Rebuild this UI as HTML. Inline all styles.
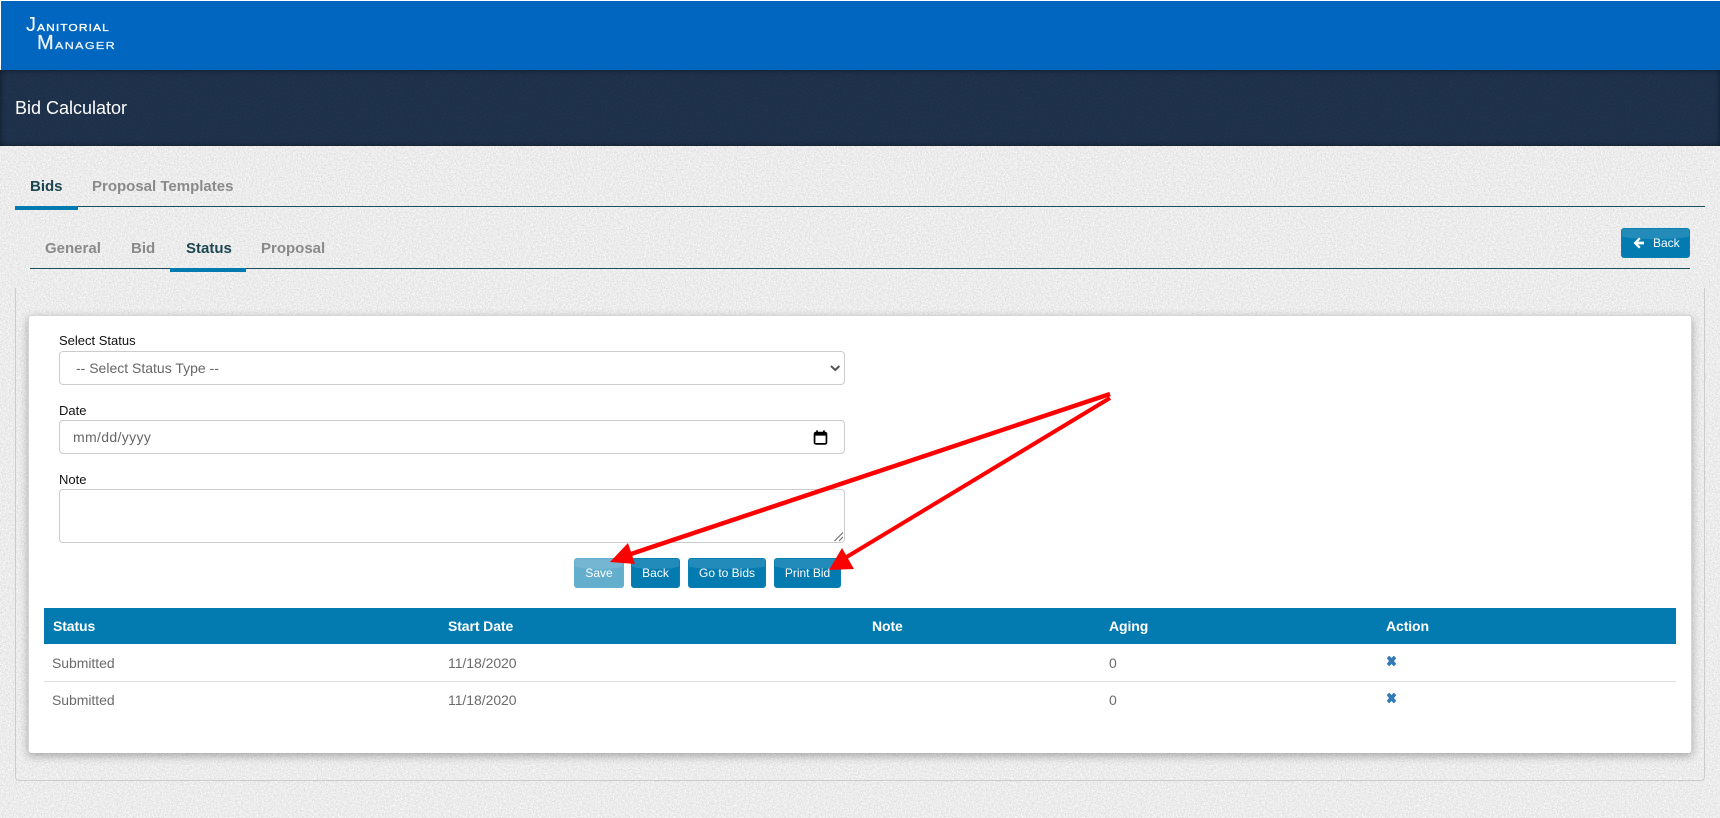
<!DOCTYPE html>
<html lang="en">
<head>
<meta charset="utf-8">
<title>Bid Calculator</title>
<style>
*{box-sizing:border-box}
html,body{margin:0;padding:0;width:1720px;height:818px;overflow:hidden;background:#ececec;font-family:"Liberation Sans",Arial,sans-serif}
.abs,.t{position:absolute}
.t{white-space:nowrap;line-height:20px}
#tex{position:absolute;left:0;top:0;width:1720px;height:818px}
#top{position:absolute;left:1px;top:1px;width:1719px;height:69px;background:#0066c0}
#navs{position:absolute;left:0;top:70px;width:1720px;height:76px;box-shadow:inset 0 0 6px rgba(0,0,0,.5)}
.tab{font-size:15px;font-weight:bold;color:#8a8a8a}
.tab.on{color:#1c4650}
.line{position:absolute;height:1px;background:#1c4f5c}
.act{position:absolute;height:4px;background:#047bb0}
.btn{position:absolute;top:558px;height:30px;border-radius:3px;background:#047bb0;color:#fff;font-size:12px;line-height:28px;text-align:center;overflow:hidden;border:1px solid #0a7fb2}
.btn:before{content:"";position:absolute;left:0;right:0;top:0;height:10px;background:rgba(255,255,255,.12);border-radius:0 0 50% 50%/0 0 3px 3px}
.btn span{position:relative}
.lbl{font-size:13px;color:#111}
.field{position:absolute;left:59px;width:786px;background:#fff;border:1px solid #ccc;border-radius:4px}
.val{font-size:14px;color:#666}
.th{font-size:14px;font-weight:bold;color:#fff;letter-spacing:-.1px}
.td{font-size:14px;color:#6b6b6b;letter-spacing:-.05px}
.sm{display:inline-block;transform-origin:left center;font-size:10px;-webkit-text-stroke:.3px currentColor}
</style>
</head>
<body>
<svg id="tex" xmlns="http://www.w3.org/2000/svg" width="1720" height="818">
<defs>
<filter id="light" x="0" y="0" width="100%" height="100%" color-interpolation-filters="sRGB">
<feTurbulence type="fractalNoise" baseFrequency="0.75" numOctaves="2" seed="4"/>
<feColorMatrix type="matrix" values="0.24 0 0 0 0.805  0.24 0 0 0 0.805  0.24 0 0 0 0.805  0 0 0 0 1"/>
</filter>
<filter id="dark" x="0" y="0" width="100%" height="100%" color-interpolation-filters="sRGB">
<feTurbulence type="fractalNoise" baseFrequency="0.75" numOctaves="2" seed="9"/>
<feColorMatrix type="matrix" values="0.07 0 0 0 0.085  0.07 0 0 0 0.158  0.07 0 0 0 0.26  0 0 0 0 1"/>
</filter>
</defs>
<rect width="1720" height="818" fill="#ececec" filter="url(#light)"/>
<rect x="0" y="70" width="1720" height="76" fill="#1f314c" filter="url(#dark)"/>
<rect x="0" y="0" width="1720" height="1" fill="#fff"/>
<rect x="0" y="0" width="1" height="70" fill="#fff"/>
</svg>

<div id="top"></div>
<div class="t" style="left:26px;top:12px;height:26px;color:#fff;line-height:26px;letter-spacing:.9px"><span style="font-size:20px">J</span><span class="sm" style="transform:scaleX(1.2)">ANITORIAL</span></div>
<div class="t" style="left:37px;top:30px;height:26px;color:#e6f0fa;line-height:26px;letter-spacing:1.1px"><span style="font-size:20px;-webkit-text-stroke:.3px currentColor">M</span><span class="sm" style="transform:scaleX(1.25)">ANAGER</span></div>

<div id="navs"></div>
<div class="t" style="left:15px;top:98px;font-size:18px;color:#fff;line-height:20px">Bid Calculator</div>

<div class="t tab on" style="left:30px;top:177px">Bids</div>
<div class="t tab" style="left:92px;top:177px">Proposal Templates</div>
<div class="line" style="left:15px;top:206px;width:1690px"></div>
<div class="act" style="left:15px;top:206px;width:63px"></div>

<div class="t tab" style="left:45px;top:239px">General</div>
<div class="t tab" style="left:131px;top:239px">Bid</div>
<div class="t tab on" style="left:186px;top:239px">Status</div>
<div class="t tab" style="left:261px;top:239px">Proposal</div>
<div class="line" style="left:30px;top:268px;width:1660px"></div>
<div class="act" style="left:170px;top:268px;width:76px"></div>

<div class="btn" style="left:1621px;top:228px;width:69px">
<svg class="abs" style="left:10px;top:7px" width="13" height="14" viewBox="0 0 13 14"><path d="M7 1.5 1.5 7 7 12.5 8.6 10.9 6 8.4H12V5.6H6L8.6 3.1Z" fill="#fff"/></svg>
<span style="position:absolute;left:31px;top:0">Back</span></div>

<div class="abs" style="left:15px;top:288px;width:1690px;height:493px;border:1px solid #ccc;border-top:0;border-radius:0 0 4px 4px"></div>
<div class="abs" style="left:28px;top:315px;width:1664px;height:438px;background:#fff;border-radius:3px;border:1px solid #d6d6d6;border-bottom:0;box-shadow:0 3px 9px rgba(0,0,0,.3)"></div>

<div class="t lbl" style="left:59px;top:331px">Select Status</div>
<div class="field" style="top:351px;height:34px"></div>
<div class="t val" style="left:76px;top:358px">-- Select Status Type --</div>
<svg class="abs" style="left:830px;top:363px" width="11" height="10" viewBox="0 0 11 10"><path d="M1 3 5.2 7 9.4 3" fill="none" stroke="#555" stroke-width="2"/></svg>

<div class="t lbl" style="left:59px;top:401px">Date</div>
<div class="field" style="top:420px;height:34px"></div>
<div class="t val" style="left:73px;top:427px;letter-spacing:.35px">mm/dd/yyyy</div>
<svg class="abs" style="left:813px;top:430px" width="15" height="15" viewBox="0 0 15 15"><path fill-rule="evenodd" d="M.7 4C.7 2.7 1.7 1.8 3 1.8H12C13.3 1.8 14.3 2.7 14.3 4V12.5C14.3 13.8 13.3 14.7 12 14.7H3C1.7 14.7 .7 13.8 .7 12.5ZM2.4 5.6V13H12.6V5.6Z" fill="#000"/><path d="M3.2 .4H4.9V3H3.2ZM10.1 .4H11.8V3H10.1Z" fill="#000"/></svg>

<div class="t lbl" style="left:59px;top:470px">Note</div>
<div class="field" style="top:489px;height:54px"></div>
<svg class="abs" style="left:833px;top:531px" width="11" height="11" viewBox="0 0 11 11"><path d="M1.5 10 10 1.5M6 10 10 6" stroke="#666" stroke-width="1"/></svg>

<div class="btn" style="left:574px;width:50px;opacity:.62"><span>Save</span></div>
<div class="btn" style="left:631px;width:49px"><span>Back</span></div>
<div class="btn" style="left:688px;width:78px"><span>Go to Bids</span></div>
<div class="btn" style="left:774px;width:67px"><span>Print Bid</span></div>

<div class="abs" style="left:44px;top:608px;width:1632px;height:36px;background:#047bb0"></div>
<div class="t th" style="left:53px;top:616px">Status</div>
<div class="t th" style="left:448px;top:616px">Start Date</div>
<div class="t th" style="left:872px;top:616px">Note</div>
<div class="t th" style="left:1109px;top:616px">Aging</div>
<div class="t th" style="left:1386px;top:616px">Action</div>

<div class="t td" style="left:52px;top:653px">Submitted</div>
<div class="t td" style="left:448px;top:653px">11/18/2020</div>
<div class="t td" style="left:1109px;top:653px">0</div>
<svg class="abs" style="left:1386px;top:655px" width="11" height="12" viewBox="0 0 11 12"><path d="M1.4 3.2 3.2 1.4 5.5 3.7 7.8 1.4 9.6 3.2 7.3 6 9.6 8.8 7.8 10.6 5.5 8.3 3.2 10.6 1.4 8.8 3.7 6Z" fill="#337ab7" stroke="#337ab7" stroke-width="1" stroke-linejoin="round"/></svg>

<div class="abs" style="left:44px;top:681px;width:1632px;height:1px;background:#ddd"></div>

<div class="t td" style="left:52px;top:690px">Submitted</div>
<div class="t td" style="left:448px;top:690px">11/18/2020</div>
<div class="t td" style="left:1109px;top:690px">0</div>
<svg class="abs" style="left:1386px;top:692px" width="11" height="12" viewBox="0 0 11 12"><path d="M1.4 3.2 3.2 1.4 5.5 3.7 7.8 1.4 9.6 3.2 7.3 6 9.6 8.8 7.8 10.6 5.5 8.3 3.2 10.6 1.4 8.8 3.7 6Z" fill="#337ab7" stroke="#337ab7" stroke-width="1" stroke-linejoin="round"/></svg>

<svg class="abs" style="left:0;top:0" width="1720" height="818" viewBox="0 0 1720 818">
<path d="M1110 394 628 555" stroke="#f00" stroke-width="4.5" fill="none"/>
<path d="M610 562 628 543 635 564Z" fill="#f00"/>
<path d="M1110 398 840 561" stroke="#f00" stroke-width="4" fill="none"/>
<path d="M829 570 842 548 854 569Z" fill="#f00"/>
</svg>
</body>
</html>
